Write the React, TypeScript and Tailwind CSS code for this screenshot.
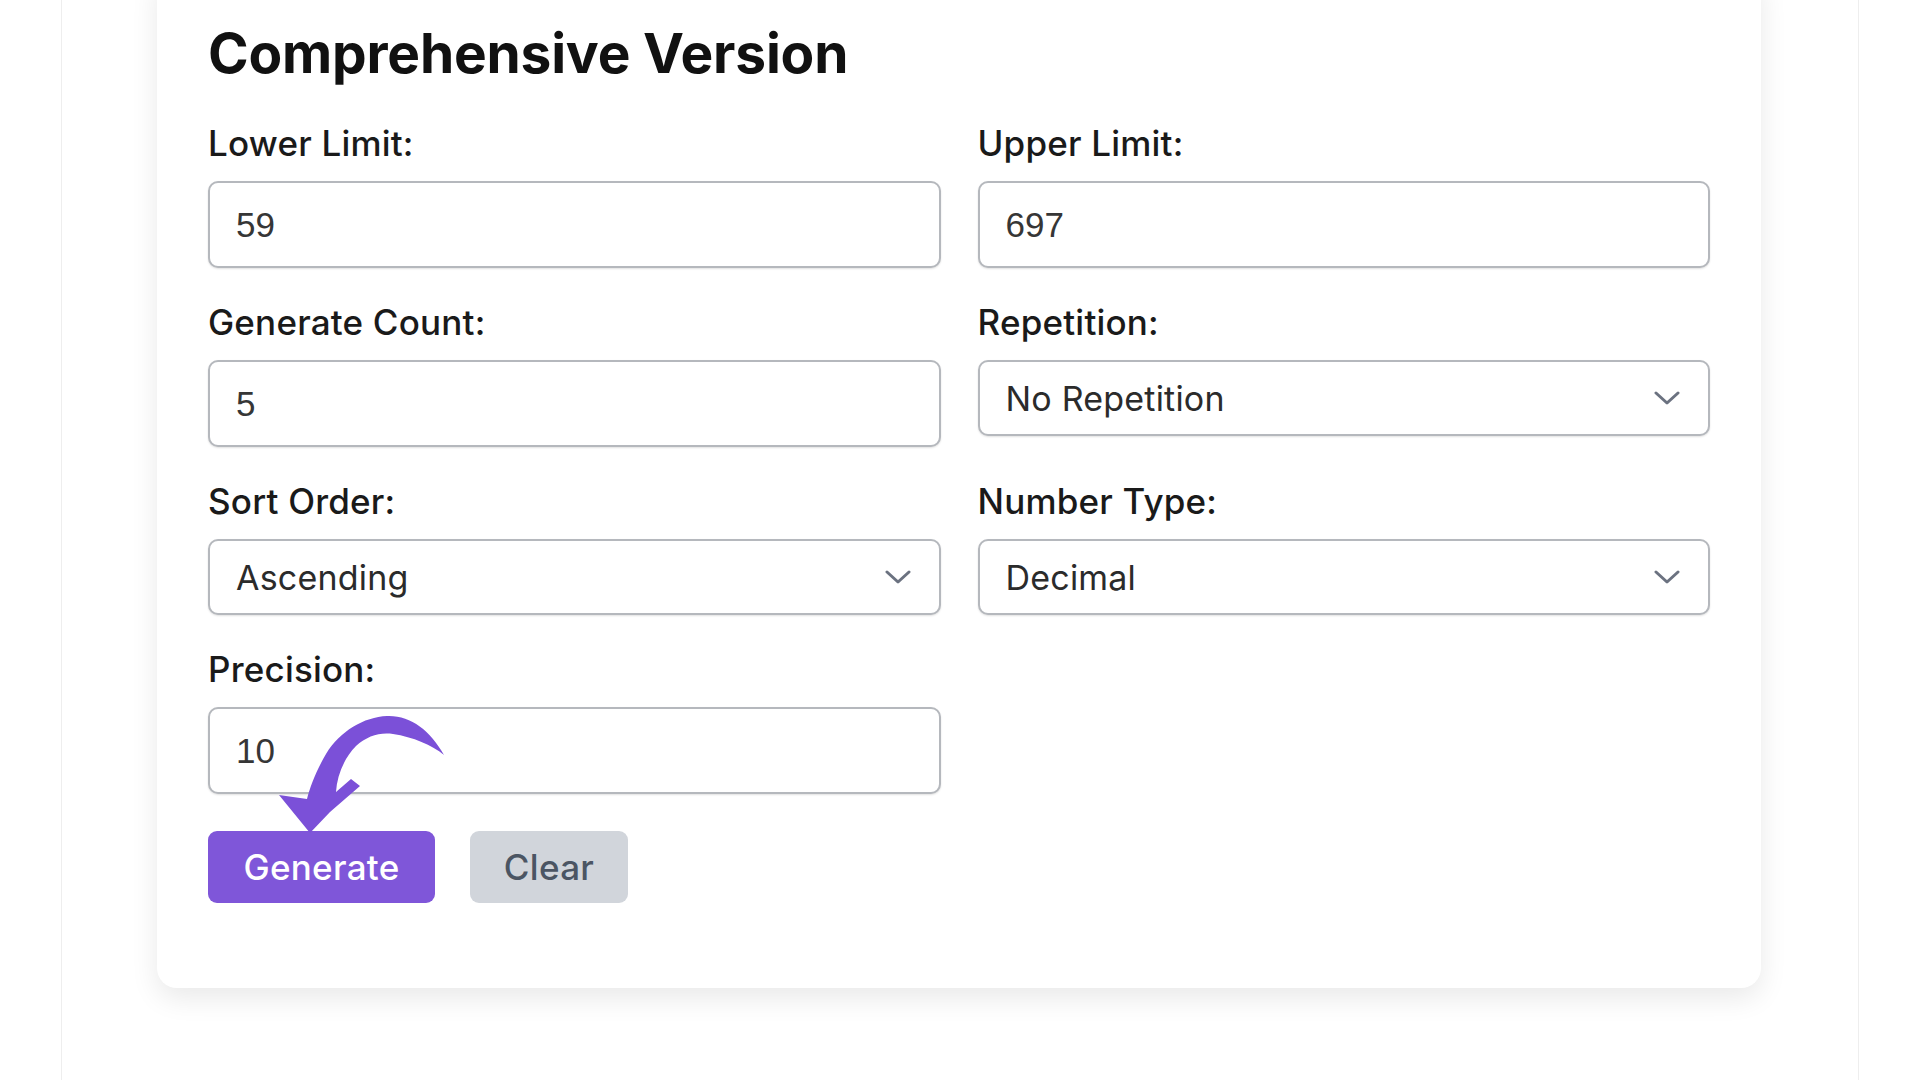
import React from 'react';

const inputCls =
  "block h-[87px] w-full rounded-[10px] border-2 border-[#b5b8bd] bg-white px-[26px] font-['Liberation_Sans',sans-serif] text-[35px] text-[#363636] shadow-[0_1px_2px_rgba(0,0,0,0.12)] outline-none";

function Field({ label, children }: { label: string; children: React.ReactNode }) {
  return (
    <div className="flex flex-col">
      <label className="mb-[16px] block text-[35px] font-medium leading-[44px] tracking-[0.2px] text-[#1a1a1a]">{label}</label>
      {children}
    </div>
  );
}

function Select({ value }: { value: string }) {
  return (
    <div className="flex h-[76px] w-full items-center justify-between rounded-[10px] border-2 border-[#b5b8bd] bg-white pl-[26px] pr-[28px] shadow-[0_1px_2px_rgba(0,0,0,0.12)]">
      <span className="text-[34px] tracking-[0.2px] text-[#2b2b2b]">{value}</span>
      <svg width="26" height="14" viewBox="0 0 26 14" fill="none">
        <path d="M2 2 L13 12 L24 2" stroke="#6b7280" strokeWidth="3" strokeLinecap="round" strokeLinejoin="round" />
      </svg>
    </div>
  );
}

export default function App() {
  return (
    <div className="h-[1080px] overflow-hidden bg-white font-['Inter',sans-serif]">
      <div className="mx-[61px] flex h-full flex-col border-x border-[#eeeeee] pl-[95px] pr-[97px]">
        <div className="relative -mt-[30px] rounded-[20px] bg-white px-[51px] pb-[85px] pt-[51px] shadow-[0_10px_28px_rgba(0,0,0,0.09)]">
          <h2 className="mb-[35px] text-[55px] font-bold leading-[65px] tracking-[-0.2px] text-[#111111]">
            Comprehensive Version
          </h2>

          <div className="grid grid-cols-2 items-start gap-x-[37px] gap-y-[32px]">
            <Field label="Lower Limit:">
              <input className={inputCls} defaultValue="59" />
            </Field>
            <Field label="Upper Limit:">
              <input className={inputCls} defaultValue="697" />
            </Field>
            <Field label="Generate Count:">
              <input className={inputCls} defaultValue="5" />
            </Field>
            <Field label="Repetition:">
              <Select value="No Repetition" />
            </Field>
            <Field label="Sort Order:">
              <Select value="Ascending" />
            </Field>
            <Field label="Number Type:">
              <Select value="Decimal" />
            </Field>
            <Field label="Precision:">
              <input className={inputCls} defaultValue="10" />
            </Field>
          </div>

          <div className="mt-[37px] flex gap-[35px]">
            <button className="h-[72px] w-[227px] rounded-[9px] bg-[#7f56d9] text-[35px] font-medium tracking-[0.3px] text-white">
              Generate
            </button>
            <button className="h-[72px] w-[158px] rounded-[9px] bg-[#d1d5db] text-[35px] font-medium tracking-[0.3px] text-[#4b5563]">
              Clear
            </button>
          </div>

          {/* hand-drawn pointer arrow over the Generate button */}
          <svg
            className="pointer-events-none absolute left-[113px] top-[730px]"
            width="190"
            height="140"
            viewBox="0 0 190 140"
          >
            <path
              d="M174 55 C160 30 140 15 117 16 C94 17 70 31 56 54 C46 71 40 87 37 99 L9 95 L40 133 L60 112 L90 86 L81 79 L66 92 C67 76 74 58 86 46 C97 36 110 32 123 34 C143 37 162 45 174 55 Z"
              fill="#7b50d8"
            />
          </svg>
        </div>
      </div>
    </div>
  );
}
